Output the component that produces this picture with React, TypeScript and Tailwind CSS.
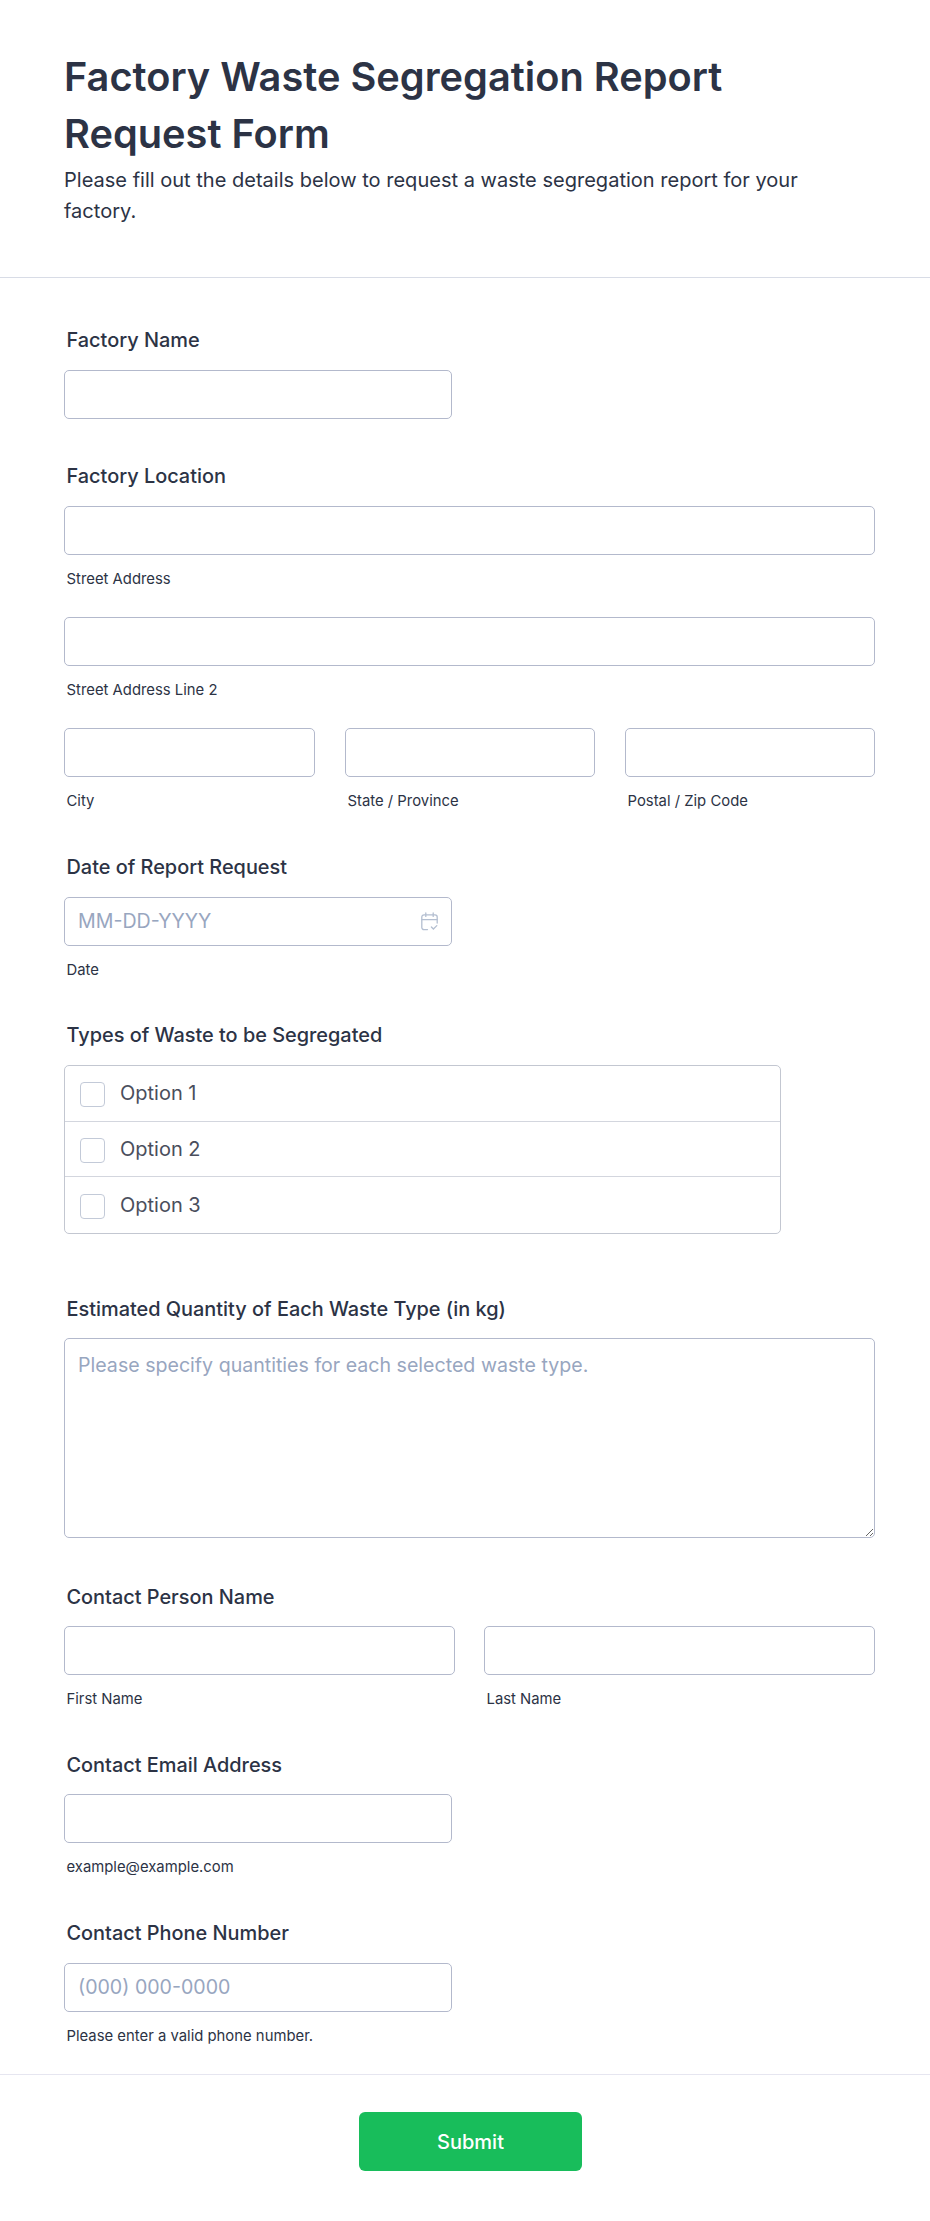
const inputBox = "block h-[49px] rounded-[5px] border border-[#b3b9cc] bg-white"

function Label({ children }: { children: string }) {
  return <div className="pl-[2.5px] text-[19.9px] font-medium leading-[29px] text-[#2c3345]">{children}</div>
}

function Sub({ children }: { children: string }) {
  return <div className="mt-[13px] pl-[2.5px] text-[14.85px] leading-[22px] text-[#2c3345]">{children}</div>
}

function TextBox({ sub, className }: { sub?: string; className?: string }) {
  return (
    <div className={className}>
      <input type="text" className={inputBox + " w-full"} />
      {sub && <Sub>{sub}</Sub>}
    </div>
  )
}

function CalendarIcon() {
  return (
    <svg width="17" height="19" viewBox="0 0 17 19" fill="none" stroke="#b4bfd1" strokeWidth="1.3" strokeLinecap="round">
      <path d="M6.5 17.6H3a2.2 2.2 0 0 1-2.2-2.2V5A2.2 2.2 0 0 1 3 2.8h11A2.2 2.2 0 0 1 16.2 5v6" />
      <path d="M1 7.6h15M4.8 1v3.4M12.2 1v3.4" />
      <path d="M10.4 15l2 2 3.4-3.4" />
    </svg>
  )
}

function Option({ text, rowClass }: { text: string; rowClass: string }) {
  return (
    <div className={"flex items-center gap-[15px] pl-[15px] " + rowClass}>
      <span className="h-[25px] w-[25px] rounded-[4px] border border-[#c3cad8] bg-white" />
      <span className="mb-[3px] text-[20px] text-[#4a4e5c]">{text}</span>
    </div>
  )
}

export default function App() {
  return (
    <div className="bg-white font-['Inter',sans-serif] text-[#2c3345]">
      <header className="h-[278px] border-b border-[#d8dce6] pl-[64px] pt-[48px]">
        <h1 className="text-[39.75px] font-semibold leading-[57px]">
          Factory Waste Segregation Report
          <br />
          Request Form
        </h1>
        <p className="mt-[3px] text-[20.05px] leading-[31px]">
          Please fill out the details below to request a waste segregation report for your
          <br />
          factory.
        </p>
      </header>

      <main className="w-[875px] pl-[64px] pt-[48px]">
        <section>
          <Label>Factory Name</Label>
          <TextBox className="mt-[15px] w-[388px]" />
        </section>

        <section className="mt-[43px]">
          <Label>Factory Location</Label>
          <TextBox className="mt-[15px]" sub="Street Address" />
          <TextBox className="mt-[27px]" sub="Street Address Line 2" />
          <div className="mt-[27px] grid grid-cols-[251px_250px_1fr] gap-[30px]">
            <TextBox sub="City" />
            <TextBox sub="State / Province" />
            <TextBox sub="Postal / Zip Code" />
          </div>
        </section>

        <section className="mt-[41px]">
          <Label>Date of Report Request</Label>
          <div className="mt-[15px] flex h-[49px] w-[388px] items-center justify-between rounded-[5px] border border-[#b3b9cc] px-[13px]">
            <span className="text-[19.6px] text-[#98a6bf]">MM-DD-YYYY</span>
            <CalendarIcon />
          </div>
          <Sub>Date</Sub>
        </section>

        <section className="mt-[40px]">
          <Label>Types of Waste to be Segregated</Label>
          <div className="mt-[15px] w-[717px] divide-y divide-[#d3d6de] rounded-[5px] border border-[#c3c7d1]">
            <Option text="Option 1" rowClass="h-[56px] pt-[1px]" />
            <Option text="Option 2" rowClass="h-[55px] pt-[3px]" />
            <Option text="Option 3" rowClass="h-[56px] pt-[3px]" />
          </div>
        </section>

        <section className="mt-[61px]">
          <Label>Estimated Quantity of Each Waste Type (in kg)</Label>
          <textarea
            placeholder="Please specify quantities for each selected waste type."
            className="mt-[14px] block h-[200px] w-full rounded-[5px] border border-[#b3b9cc] px-[13px] py-[10px] text-[19.6px] leading-[32px] placeholder:text-[#98a6bf]"
          />
        </section>

        <section className="mt-[45px]">
          <Label>Contact Person Name</Label>
          <div className="mt-[14px] grid grid-cols-2 gap-[29px]">
            <TextBox sub="First Name" />
            <TextBox sub="Last Name" />
          </div>
        </section>

        <section className="mt-[41px]">
          <Label>Contact Email Address</Label>
          <TextBox className="mt-[14px] w-[388px]" sub="example@example.com" />
        </section>

        <section className="mt-[41px]">
          <Label>Contact Phone Number</Label>
          <div className="mt-[15px] flex h-[49px] w-[388px] items-center rounded-[5px] border border-[#b3b9cc] pl-[13px]">
            <span className="text-[19.6px] text-[#98a6bf]">(000) 000-0000</span>
          </div>
          <Sub>Please enter a valid phone number.</Sub>
        </section>
      </main>

      <footer className="mt-[27px] border-t border-[#e6e6f0] pb-[49px] pl-[359px] pt-[37px]">
        <button className="block h-[59px] w-[223px] rounded-[6px] bg-[#18bd5b] text-[20px] font-medium text-white">Submit</button>
      </footer>
    </div>
  )
}
